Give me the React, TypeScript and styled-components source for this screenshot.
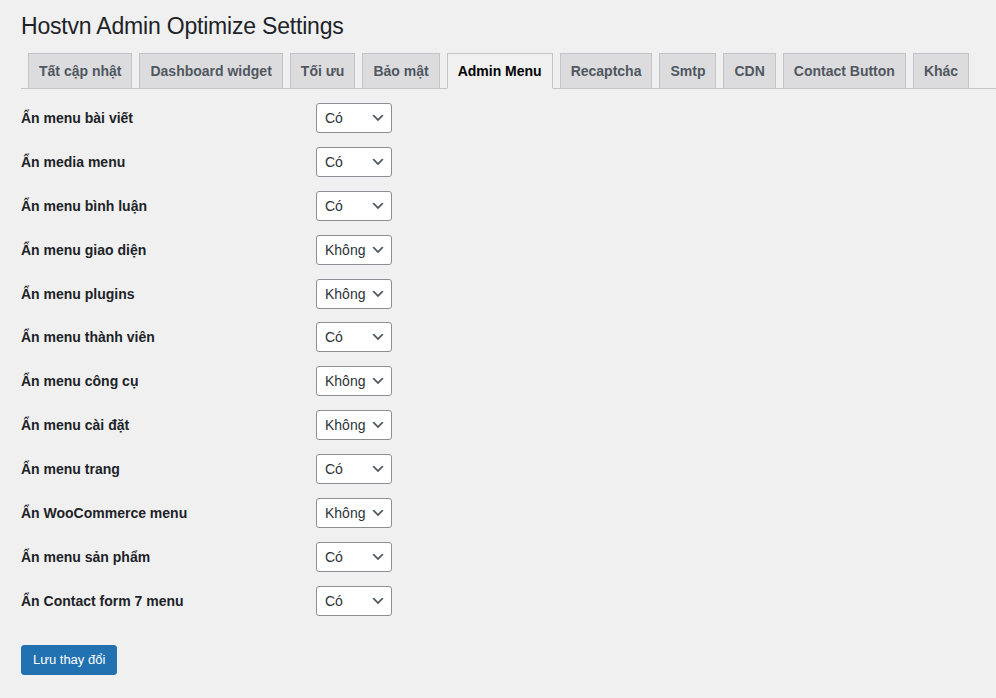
import styled, { createGlobalStyle } from 'styled-components';

const GlobalStyle = createGlobalStyle`
  html, body {
    margin: 0;
    background: #f0f0f1;
  }
  body {
    font-family: "Liberation Sans", Arial, sans-serif;
    color: #1d2327;
  }
`;

const tabs = [
  'Tất cập nhật',
  'Dashboard widget',
  'Tối ưu',
  'Bảo mật',
  'Admin Menu',
  'Recaptcha',
  'Smtp',
  'CDN',
  'Contact Button',
  'Khác',
];

const settings: [string, boolean][] = [
  ['Ẩn menu bài viết', true],
  ['Ẩn media menu', true],
  ['Ẩn menu bình luận', true],
  ['Ẩn menu giao diện', false],
  ['Ẩn menu plugins', false],
  ['Ẩn menu thành viên', true],
  ['Ẩn menu công cụ', false],
  ['Ẩn menu cài đặt', false],
  ['Ẩn menu trang', true],
  ['Ẩn WooCommerce menu', false],
  ['Ẩn menu sản phẩm', true],
  ['Ẩn Contact form 7 menu', true],
];

function Chevron() {
  return (
    <Arrow viewBox="0 0 20 20" aria-hidden="true">
      <path d="M5 6l5 5 5-5 2 1-7 7-7-7 2-1z" fill="#50575e" />
    </Arrow>
  );
}

export default function App() {
  return (
    <Wrap>
      <GlobalStyle />
      <Title>Hostvn Admin Optimize Settings</Title>
      <TabBar>
        {tabs.map((t) => (
          <Tab key={t} $active={t === 'Admin Menu'}>
            {t}
          </Tab>
        ))}
      </TabBar>
      <Form>
        {settings.map(([label, yes]) => (
          <Row key={label}>
            <Label>{label}</Label>
            <SelectBox>
              <Select defaultValue={yes ? '1' : '0'}>
                <option value="1">Có</option>
                <option value="0">Không</option>
              </Select>
              <Chevron />
            </SelectBox>
          </Row>
        ))}
        <Submit type="button">Lưu thay đổi</Submit>
      </Form>
    </Wrap>
  );
}

const Wrap = styled.div`
  padding: 11px 0 0 21px;
`;
const Title = styled.h1`
  margin: 0;
  font-size: 23px;
  font-weight: 400;
  line-height: 30px;
  letter-spacing: -0.2px;
  color: #1d2327;
`;
const TabBar = styled.nav`
  display: flex;
  margin-top: 12px;
  border-bottom: 1px solid #c3c4c7;
`;
const Tab = styled.a<{ $active?: boolean }>`
  margin-left: 7px;
  margin-bottom: -1px;
  padding: 5px 10px;
  font-size: 14px;
  font-weight: 600;
  line-height: 24px;
  white-space: nowrap;
  border: 1px solid #c3c4c7;
  background: ${(p) => (p.$active ? '#f0f0f1' : '#dcdcde')};
  border-bottom-color: ${(p) => (p.$active ? '#f0f0f1' : '#c3c4c7')};
  color: ${(p) => (p.$active ? '#000' : '#50575e')};
  cursor: pointer;
`;
const Form = styled.form`
  margin-top: 7px;
  display: flex;
  flex-direction: column;
  align-items: flex-start;
`;
const Row = styled.div`
  display: grid;
  grid-template-columns: 295px auto;
  align-items: center;
  height: 43.9px;
`;
const Label = styled.label`
  font-size: 14px;
  font-weight: 600;
  color: #1d2327;
`;
const SelectBox = styled.div`
  position: relative;
  width: 76px;
  height: 30px;
`;
const Select = styled.select`
  appearance: none;
  width: 100%;
  height: 30px;
  margin: 0;
  padding: 0 24px 0 8px;
  font-family: inherit;
  font-size: 14px;
  line-height: 28px;
  color: #2c3338;
  background: #fff;
  border: 1px solid #8c8f94;
  border-radius: 3px;
  box-sizing: border-box;
`;
const Arrow = styled.svg`
  position: absolute;
  right: 6px;
  top: 7px;
  width: 16px;
  height: 16px;
  pointer-events: none;
`;
const Submit = styled.button`
  margin-top: 22px;
  height: 30px;
  padding: 0 11px;
  font-family: inherit;
  font-size: 13px;
  color: #fff;
  background: #2271b1;
  border: 1px solid #2271b1;
  border-radius: 3px;
  cursor: pointer;
`;
